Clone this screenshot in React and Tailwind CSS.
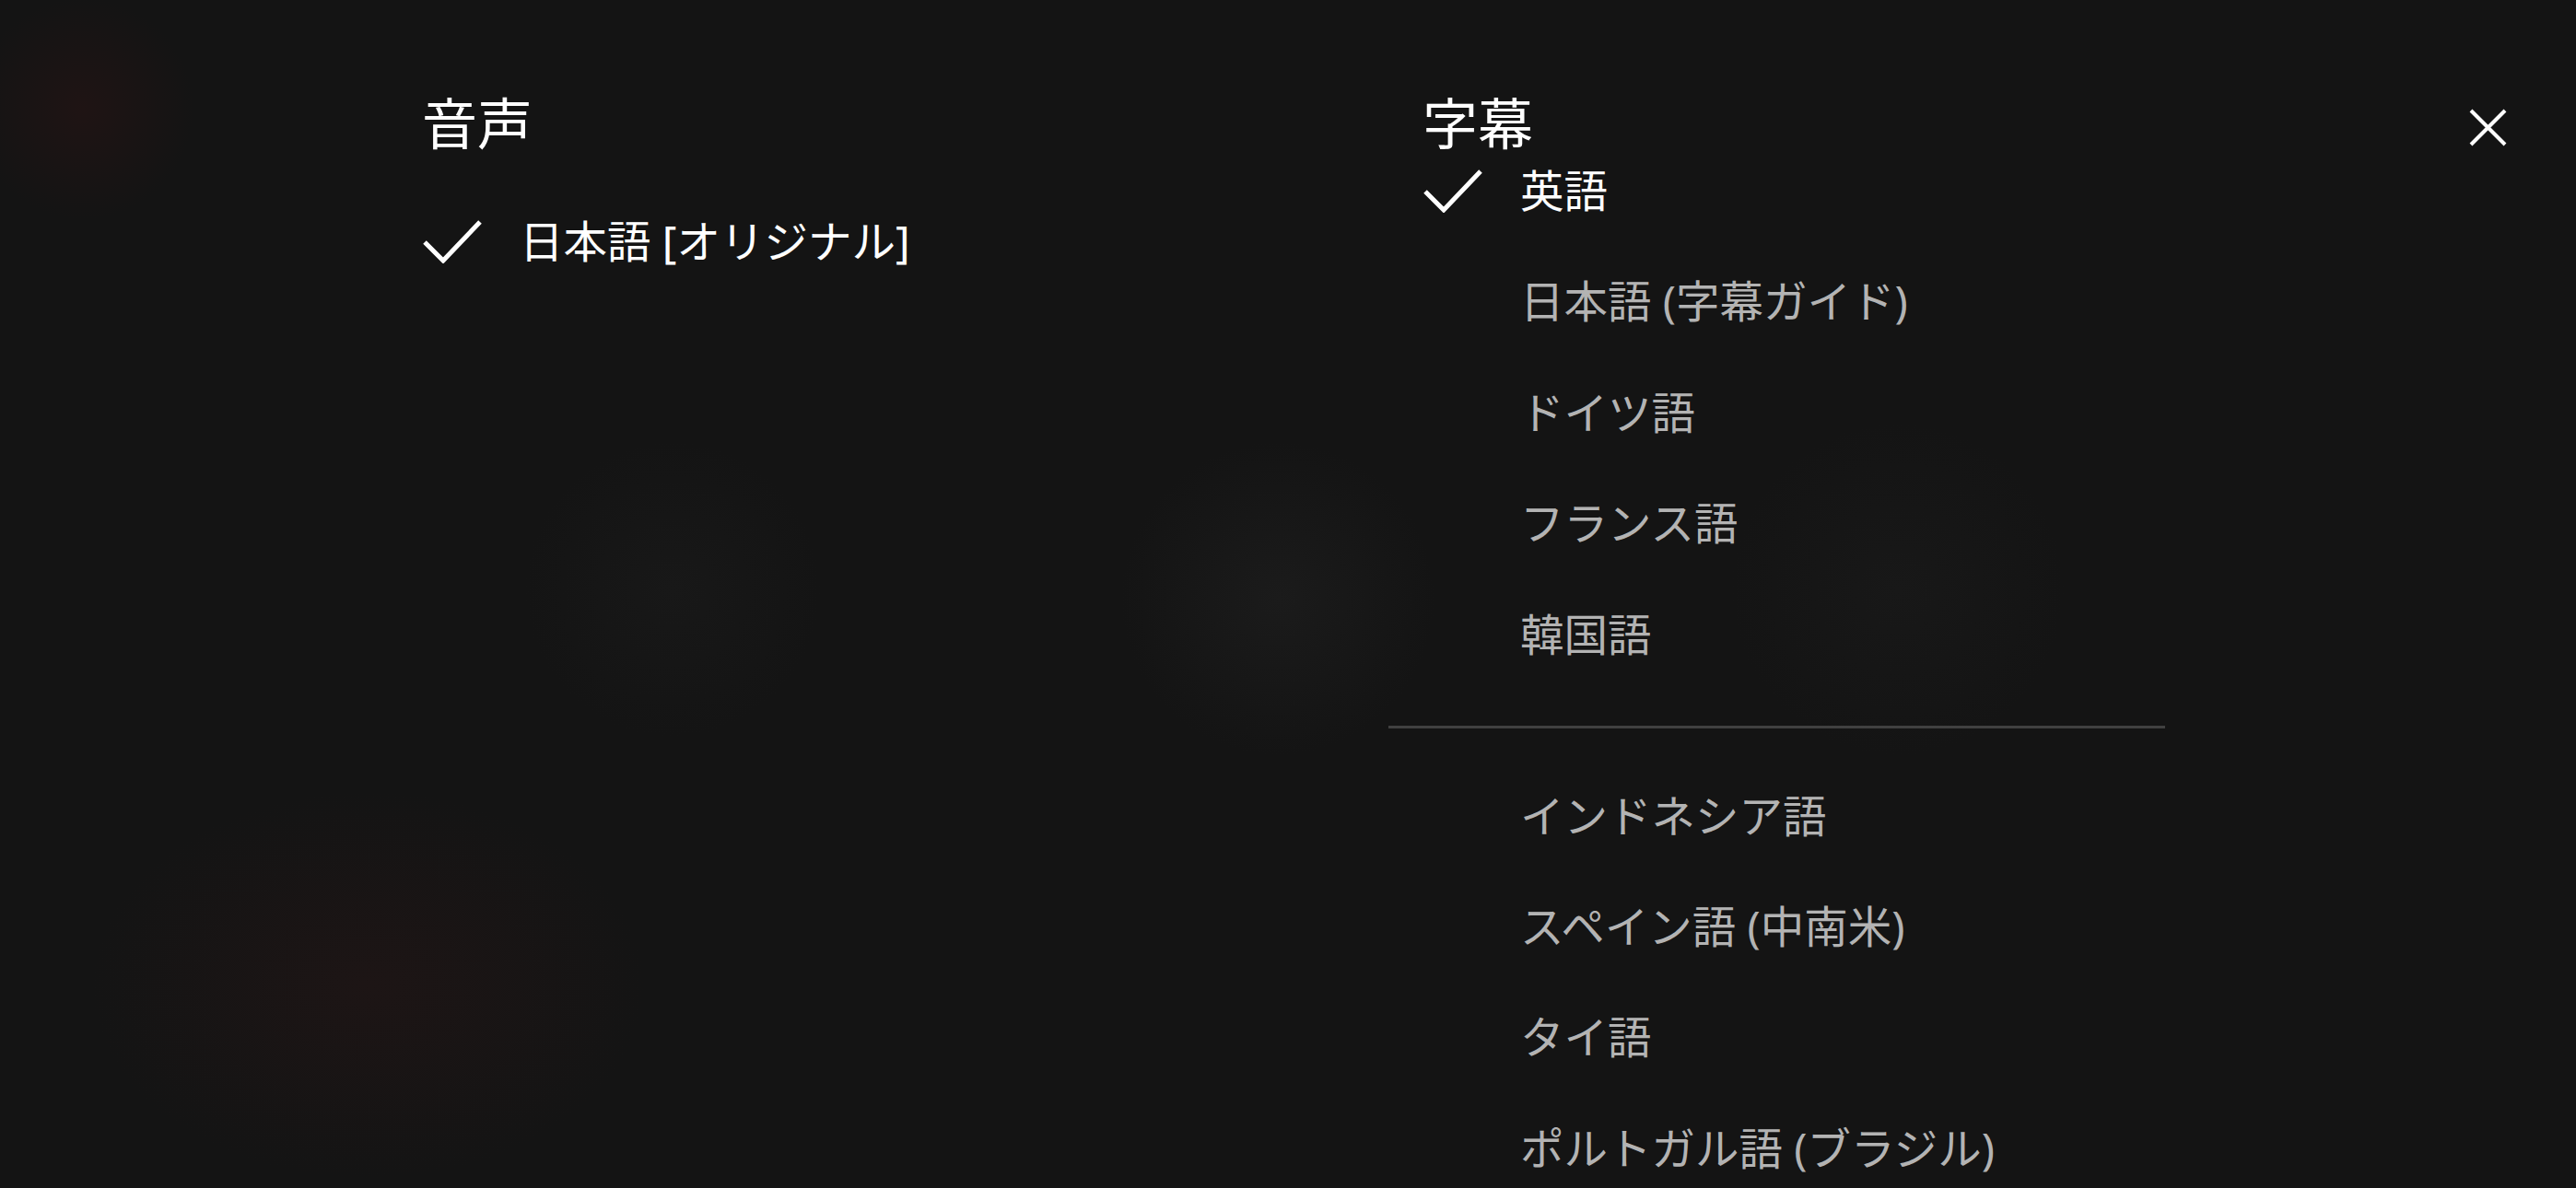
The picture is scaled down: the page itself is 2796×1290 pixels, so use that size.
import React from 'react';

const audioTracks = [{ label: '日本語 [オリジナル]', selected: true }];

const subtitleGroups = [
    [
        { label: '英語', selected: true },
        { label: '日本語 (字幕ガイド)' },
        { label: 'ドイツ語' },
        { label: 'フランス語' },
        { label: '韓国語' },
    ],
    [
        { label: 'インドネシア語' },
        { label: 'スペイン語 (中南米)' },
        { label: 'タイ語' },
        { label: 'ポルトガル語 (ブラジル)' },
    ],
];

const Check = () => (
    <svg width="66" height="48" viewBox="0 0 66 48" fill="none">
        <path d="M3 25 L23 45 L63 3" stroke="#ffffff" strokeWidth="5" strokeLinecap="butt" strokeLinejoin="miter" />
    </svg>
);

const TrackRow = ({ label, selected }) => (
    <li className="flex items-center h-[48px]">
        <span className="w-[106px] shrink-0 flex items-center">{selected && <Check />}</span>
        <span className={`text-[47.5px] leading-[48px] whitespace-nowrap ${selected ? 'text-white' : 'text-[#b3b3b3]'}`}>{label}</span>
    </li>
);

const App = () => {
    return (
        <div
            className="w-[2796px] h-[1290px] overflow-hidden bg-[#141414] bg-[radial-gradient(circle_at_90px_118px,#1f1414_0,transparent_120px),radial-gradient(ellipse_300px_210px_at_400px_1070px,#1d1515_0,transparent_100%),radial-gradient(circle_at_730px_640px,#181818_0,transparent_160px),radial-gradient(circle_at_1387px_650px,#1b1b1b_0,transparent_170px),radial-gradient(circle_at_2060px_640px,#181818_0,transparent_180px)] flex items-start pt-[104px] pl-[458px]"
            style={{ fontFamily: '"Noto Sans", "Noto Sans CJK JP", sans-serif' }}
        >
            {/* audio */}
            <section className="w-[1049px] shrink-0">
                <h2 className="text-[60px] leading-[60px] text-white font-normal mb-[74px]">音声</h2>
                <ul className="flex flex-col gap-[72px]">
                    {audioTracks.map((t) => (
                        <TrackRow key={t.label} {...t} />
                    ))}
                </ul>
            </section>

            {/* subtitles */}
            <section className="w-[843px] shrink-0">
                <h2 className="pl-[37px] text-[60px] leading-[60px] text-white font-normal mb-[19px]">字幕</h2>
                {subtitleGroups.map((group, i) => (
                    <div key={i}>
                        {i > 0 && <div className="h-[3px] bg-[#404040] mt-[75px] mb-[71px]" />}
                        <ul className="pl-[37px] flex flex-col gap-[72.4px]">
                            {group.map((t) => (
                                <TrackRow key={t.label} {...t} />
                            ))}
                        </ul>
                    </div>
                ))}
            </section>

            <button className="ml-auto mr-[75px] mt-[14px] w-[41px] h-[41px] flex items-center justify-center">
                <svg width="41" height="41" viewBox="0 0 41 41" fill="none">
                    <path d="M2 2 L39 39 M39 2 L2 39" stroke="#ffffff" strokeWidth="4" />
                </svg>
            </button>
        </div>
    );
};

export default App;
